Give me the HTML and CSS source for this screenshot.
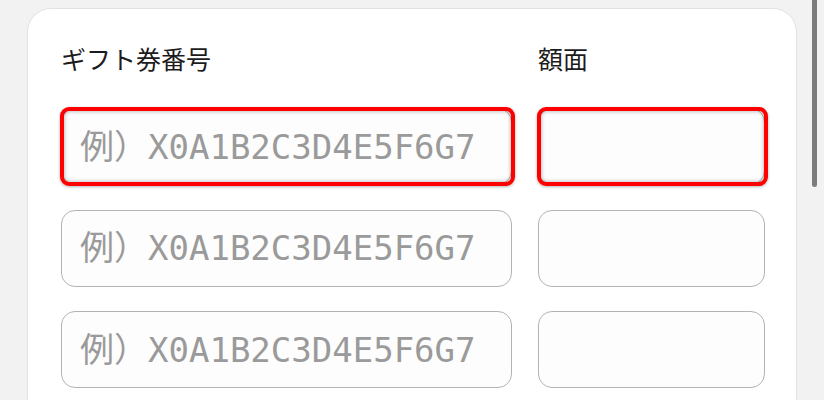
FILE: index.html
```html
<!DOCTYPE html>
<html lang="ja">
<head>
  <meta charset="UTF-8" />
  <meta name="viewport" content="width=device-width, initial-scale=1.0"/>
  <title>ギフト券</title>
  <link rel="stylesheet" href="styles.css">
</head>
<body>
  <section class="card">
    <form class="gift-form">
      <label class="label" for="code1">ギフト券番号</label>
      <label class="label" for="amount1">額面</label>

      <div class="field mark">
        <input type="text" id="code1" class="input code" placeholder="例）X0A1B2C3D4E5F6G7" />
      </div>
      <div class="field mark">
        <input type="text" id="amount1" class="input" />
      </div>

      <div class="field">
        <input type="text" id="code2" class="input code" placeholder="例）X0A1B2C3D4E5F6G7" />
      </div>
      <div class="field">
        <input type="text" id="amount2" class="input" />
      </div>

      <div class="field">
        <input type="text" id="code3" class="input code" placeholder="例）X0A1B2C3D4E5F6G7" />
      </div>
      <div class="field">
        <input type="text" id="amount3" class="input" />
      </div>
    </form>
  </section>

  <div class="scrollbar"></div>
</body>
</html>
```

FILE: styles.css
```css
html {
  overflow: hidden;
}

body {
  margin: 0;
  font-family: "Noto Sans CJK JP", sans-serif;
  background: #f2f2f2;
}

.card {
  box-sizing: border-box;
  width: 770px;
  margin: 8px 0 0 27px;
  padding: 31px 31px 60px 33px;
  background: white;
  border: 1px solid #e2e2e2;
  border-radius: 24px;
}

.gift-form {
  display: grid;
  grid-template-columns: 451px 227px;
  column-gap: 26px;
  row-gap: 24.5px;
}

.label {
  font-size: 25px;
  line-height: 36px;
  font-weight: 400;
  color: #1c1c1c;
  margin-bottom: 7.5px;
}

.field {
  position: relative;
}

.input {
  box-sizing: border-box;
  display: block;
  width: 100%;
  height: 77px;
  padding: 0 18px;
  background: #fdfdfd;
  border: 1px solid #b3b3b3;
  border-radius: 14px;
  font-family: "DejaVu Sans Mono", "Noto Sans CJK JP", monospace;
  font-size: 34px;
  color: #333;
  outline: none;
}

.input::placeholder {
  color: #9a9a9a;
}

/* red annotation box over the first row */
.mark::after {
  content: "";
  position: absolute;
  top: -1px;
  left: -1px;
  right: -3px;
  bottom: -1px;
  border: 4px solid #ff0000;
  border-radius: 9px;
  box-shadow: inset 0 0 4px rgba(0,0,0,0.35), 0 1px 3px rgba(0,0,0,0.3);
  pointer-events: none;
}

.scrollbar {
  position: fixed;
  top: -4px;
  left: 812px;
  width: 5px;
  height: 191px;
  background: #7c7c7c;
  border-radius: 3px;
}
```
